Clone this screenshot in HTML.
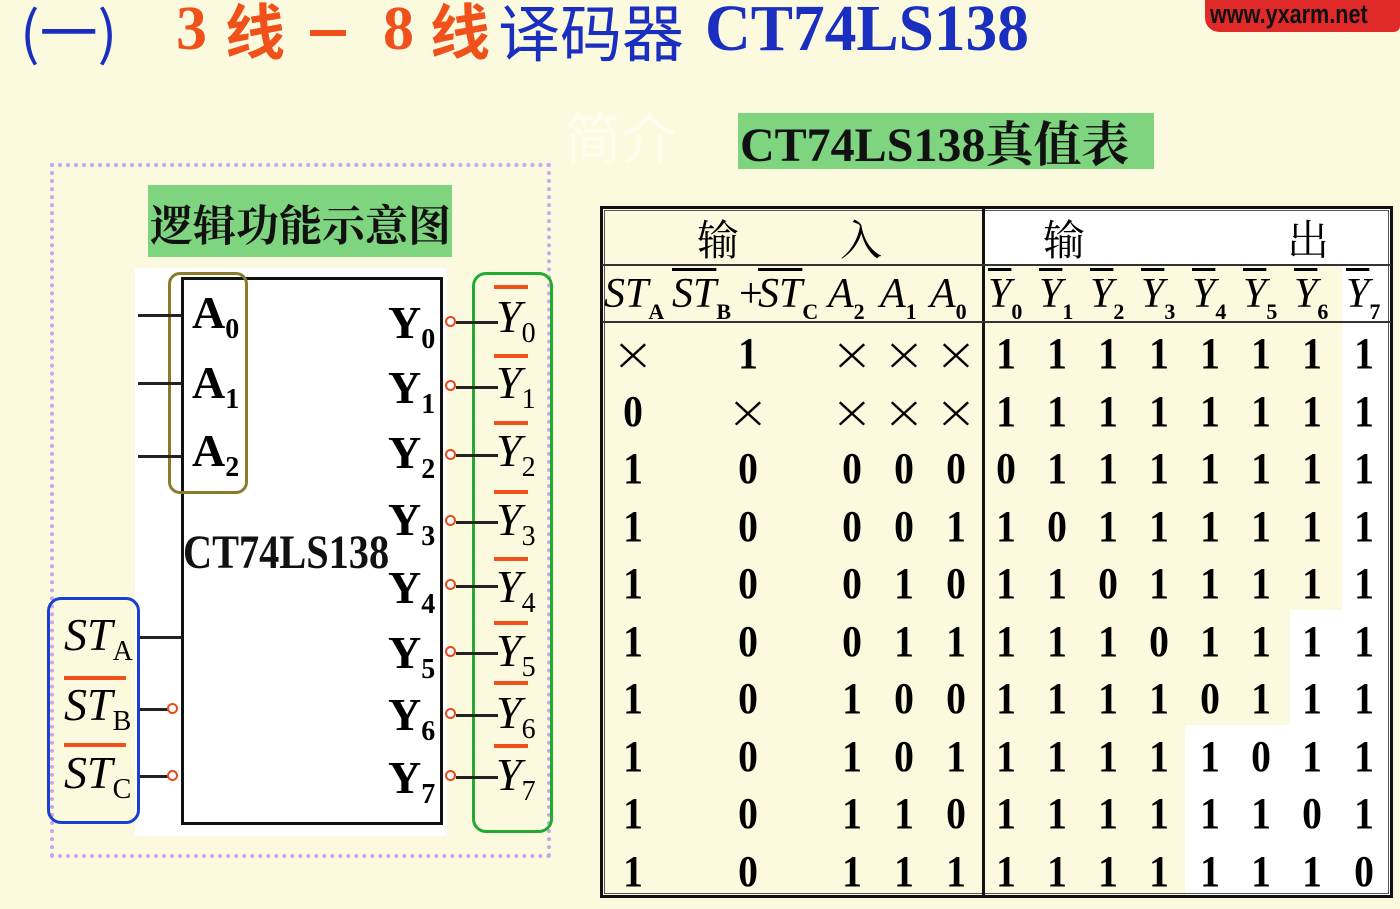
<!DOCTYPE html>
<html><head><meta charset="utf-8"><style>
*{margin:0;padding:0;box-sizing:border-box}
body{width:1400px;height:909px;background:#fbfadf;position:relative;overflow:hidden;font-family:"Liberation Serif","Noto Serif CJK SC",serif}
.a{position:absolute;white-space:nowrap}
.t{font-size:62px;line-height:62px;top:-2px}
.cj{font-family:"Noto Sans CJK SC",sans-serif}
.b{font-weight:bold}
.blue{color:#1a2fc0}
.org{color:#f0501a}
.num{font-family:"Liberation Serif",serif;font-weight:bold;font-size:44px;line-height:42px;transform:translateX(-50%) scaleX(0.9)}
.x{font-family:"DejaVu Sans",sans-serif;font-size:46px;line-height:42px;transform:translateX(-50%) scaleX(1.1);font-weight:200}
.yl{font-family:"Liberation Serif",serif;font-weight:bold;font-size:46px;line-height:46px}
.yl sub,.yi sub{font-size:28px;vertical-align:-10px}
.yi{font-family:"Liberation Serif",serif;font-style:italic;font-size:46px;line-height:46px}
.circ{position:absolute;width:11px;height:11px;border:2px solid #e64a1e;border-radius:50%;background:#fff}
.ln{position:absolute;height:3px;background:#222}
.ob{position:absolute;height:4px;background:#f0501a}
.hd{font-family:"Liberation Serif",serif;font-style:italic;font-size:42px;line-height:44px}
.hd sub{font-size:22px;font-style:normal;font-weight:bold;vertical-align:-12px}
.ov{text-decoration:overline;text-decoration-thickness:3px}
</style></head><body>
<!-- title -->
<div class="a t blue cj" style="left:20px;font-size:58px">(一)</div>
<div class="a t org b" style="left:176px">3</div>
<div class="a t org cj b" style="left:225px;font-size:60px">线</div>
<div class="a" style="left:310px;top:30px;width:36px;height:6px;background:#f0501a"></div>
<div class="a t org b" style="left:383px">8</div>
<div class="a t org cj b" style="left:430px;font-size:60px">线</div>
<div class="a t blue cj" style="left:498px;font-size:62px">译码器</div>
<div class="a t blue b" style="left:705px;font-size:66px;transform:scaleX(0.96);transform-origin:left">CT74LS138</div>
<div class="a" style="left:1205px;top:0;width:195px;height:32px;background:#e02a2a;border-radius:0 0 6px 14px"></div>
<div class="a" style="left:1210px;top:0;font-family:'Liberation Sans',sans-serif;font-weight:bold;font-size:27px;line-height:28px;color:#111;transform:scaleX(0.8);transform-origin:left">www.yxarm.net</div>
<div class="a cj" style="left:565px;top:95px;font-size:56px;color:#fffdf0;opacity:.8">简介</div>
<!-- green label -->
<div class="a" style="left:738px;top:113px;width:416px;height:56px;background:#7fd47f"></div>
<div class="a b" style="left:740px;top:116px;font-size:48px;line-height:50px;color:#111">CT74LS138<span style="font-family:'Noto Serif CJK SC',serif">真值表</span></div>
<!-- diagram -->
<div class="a" style="left:50px;top:163px;width:501px;height:695px;border:4px dotted #c9a6f0"></div>
<div class="a" style="left:148px;top:185px;width:304px;height:72px;background:#7fd47f"></div>
<div class="a b" style="left:150px;top:196px;font-family:'Noto Serif CJK SC',serif;font-size:43px;line-height:56px;color:#111">逻辑功能示意图</div>
<div class="a" style="left:135px;top:268px;width:312px;height:568px;background:#fff"></div>
<div class="a" style="left:181px;top:277px;width:262px;height:548px;border:3px solid #111"></div>
<div class="a" style="left:168px;top:272px;width:80px;height:222px;border:3px solid #8a7a2a;border-radius:12px"></div>
<div class="a" style="left:472px;top:272px;width:81px;height:561px;border:3px solid #22aa33;border-radius:14px"></div>
<div class="a" style="left:47px;top:597px;width:93px;height:227px;border:3px solid #1a40d0;border-radius:14px"></div>
<div class="ln" style="left:138px;top:314px;width:44px"></div>
<div class="ln" style="left:138px;top:382px;width:44px"></div>
<div class="ln" style="left:138px;top:455px;width:44px"></div>
<div class="a yl" style="left:192px;top:290px">A<sub>0</sub></div>
<div class="a yl" style="left:192px;top:360px">A<sub>1</sub></div>
<div class="a yl" style="left:192px;top:428px">A<sub>2</sub></div>
<div class="ln" style="left:140px;top:636px;width:42px"></div>
<div class="ln" style="left:140px;top:708px;width:30px"></div>
<div class="ln" style="left:140px;top:775px;width:30px"></div>
<div class="circ" style="left:167px;top:703px"></div>
<div class="circ" style="left:167px;top:770px"></div>
<div class="a yi" style="left:64px;top:612px">ST<sub style="font-style:normal">A</sub></div>
<div class="ob" style="left:64px;top:676px;width:62px"></div>
<div class="a yi" style="left:64px;top:682px">ST<sub style="font-style:normal">B</sub></div>
<div class="ob" style="left:64px;top:743px;width:62px"></div>
<div class="a yi" style="left:64px;top:750px">ST<sub style="font-style:normal">C</sub></div>
<div class="a b" style="left:183px;top:528px;font-size:48px;line-height:50px;color:#111;transform:scaleX(0.84);transform-origin:left">CT74LS138</div>
<!-- outputs -->
<div class="a yl" style="left:388px;top:300px">Y<sub>0</sub></div>
<div class="a yl" style="left:388px;top:365px">Y<sub>1</sub></div>
<div class="a yl" style="left:388px;top:430px">Y<sub>2</sub></div>
<div class="a yl" style="left:388px;top:497px">Y<sub>3</sub></div>
<div class="a yl" style="left:388px;top:565px">Y<sub>4</sub></div>
<div class="a yl" style="left:388px;top:630px">Y<sub>5</sub></div>
<div class="a yl" style="left:388px;top:692px">Y<sub>6</sub></div>
<div class="a yl" style="left:388px;top:755px">Y<sub>7</sub></div>
<div class="circ" style="left:445px;top:316px"></div><div class="ln" style="left:456px;top:321px;width:42px"></div>
<div class="circ" style="left:445px;top:380px"></div><div class="ln" style="left:456px;top:386px;width:42px"></div>
<div class="circ" style="left:445px;top:449px"></div><div class="ln" style="left:456px;top:454px;width:42px"></div>
<div class="circ" style="left:445px;top:515px"></div><div class="ln" style="left:456px;top:521px;width:42px"></div>
<div class="circ" style="left:445px;top:579px"></div><div class="ln" style="left:456px;top:585px;width:42px"></div>
<div class="circ" style="left:445px;top:646px"></div><div class="ln" style="left:456px;top:652px;width:42px"></div>
<div class="circ" style="left:445px;top:708px"></div><div class="ln" style="left:456px;top:714px;width:42px"></div>
<div class="circ" style="left:445px;top:770px"></div><div class="ln" style="left:456px;top:776px;width:42px"></div>
<div class="ob" style="left:494px;top:285px;width:34px"></div><div class="a yi" style="left:496px;top:294px">Y<sub style="font-style:normal">0</sub></div>
<div class="ob" style="left:494px;top:354px;width:34px"></div><div class="a yi" style="left:496px;top:360px">Y<sub style="font-style:normal">1</sub></div>
<div class="ob" style="left:494px;top:421px;width:34px"></div><div class="a yi" style="left:496px;top:428px">Y<sub style="font-style:normal">2</sub></div>
<div class="ob" style="left:494px;top:490px;width:34px"></div><div class="a yi" style="left:496px;top:497px">Y<sub style="font-style:normal">3</sub></div>
<div class="ob" style="left:494px;top:557px;width:34px"></div><div class="a yi" style="left:496px;top:564px">Y<sub style="font-style:normal">4</sub></div>
<div class="ob" style="left:494px;top:621px;width:34px"></div><div class="a yi" style="left:496px;top:628px">Y<sub style="font-style:normal">5</sub></div>
<div class="ob" style="left:494px;top:681px;width:34px"></div><div class="a yi" style="left:496px;top:690px">Y<sub style="font-style:normal">6</sub></div>
<div class="ob" style="left:494px;top:744px;width:34px"></div><div class="a yi" style="left:496px;top:752px">Y<sub style="font-style:normal">7</sub></div>
<!-- table -->
<div class="a" style="left:983px;top:207px;width:409px;height:58px;background:#fff"></div>
<div class="a" style="left:1342px;top:265px;width:50px;height:632px;background:#fff"></div>
<div class="a" style="left:1290px;top:610px;width:52px;height:287px;background:#fff"></div>
<div class="a" style="left:1185px;top:725px;width:105px;height:172px;background:#fff"></div>
<div class="a" style="left:600px;top:206px;width:793px;height:692px;border:3px solid #111"></div>
<div class="a" style="left:604px;top:210px;width:785px;height:684px;border:1px solid #555"></div>
<div class="a" style="left:982px;top:208px;width:3px;height:688px;background:#111"></div>
<div class="a" style="left:602px;top:264px;width:789px;height:2px;background:#333"></div>
<div class="a" style="left:602px;top:321px;width:789px;height:2px;background:#333"></div>
<div class="a" style="left:697px;top:214px;font-family:'Noto Serif CJK SC',serif;font-size:42px;line-height:48px">输</div>
<div class="a" style="left:840px;top:214px;font-family:'Noto Serif CJK SC',serif;font-size:42px;line-height:48px">入</div>
<div class="a" style="left:1043px;top:214px;font-family:'Noto Serif CJK SC',serif;font-size:42px;line-height:48px">输</div>
<div class="a" style="left:1287px;top:214px;font-family:'Noto Serif CJK SC',serif;font-size:42px;line-height:48px">出</div>
<div class="a hd" style="left:604px;top:272px">ST<sub>A</sub></div>
<div class="a hd" style="left:672px;top:272px"><span class="ov">ST</span><sub>B</sub></div>
<div class="a hd" style="left:739px;top:272px;font-style:normal">+</div>
<div class="a hd" style="left:758px;top:272px"><span class="ov">ST</span><sub>C</sub></div>
<div class="a hd" style="left:828px;top:272px">A<sub>2</sub></div>
<div class="a hd" style="left:880px;top:272px">A<sub>1</sub></div>
<div class="a hd" style="left:930px;top:272px">A<sub>0</sub></div>
<div id="rows"></div>
<script>
var rows=[["×","1","×","×","×","11111111"],["0","×","×","×","×","11111111"],["1","0","0","0","0","01111111"],["1","0","0","0","1","10111111"],["1","0","0","1","0","11011111"],["1","0","0","1","1","11101111"],["1","0","1","0","0","11110111"],["1","0","1","0","1","11111011"],["1","0","1","1","0","11111101"],["1","0","1","1","1","11111110"]];
var xs=[633,748,852,904,956],ys=[1006,1057,1108,1159,1210,1261,1312,1364],h="";
for(var k=0;k<8;k++)h+='<div class="a hd" style="left:'+(ys[k]-18)+'px;top:272px"><span class="ov">Y</span><sub>'+k+'</sub></div>';
rows.forEach(function(r,i){var top=333+i*57.5;
for(var j=0;j<5;j++){var c=r[j]=="×"?"x":"num";h+='<div class="a '+c+'" style="left:'+xs[j]+'px;top:'+top+'px">'+r[j]+'</div>';}
for(var k=0;k<8;k++)h+='<div class="a num" style="left:'+ys[k]+'px;top:'+top+'px">'+r[5][k]+'</div>';});
document.getElementById("rows").innerHTML=h;
</script>
</body></html>
